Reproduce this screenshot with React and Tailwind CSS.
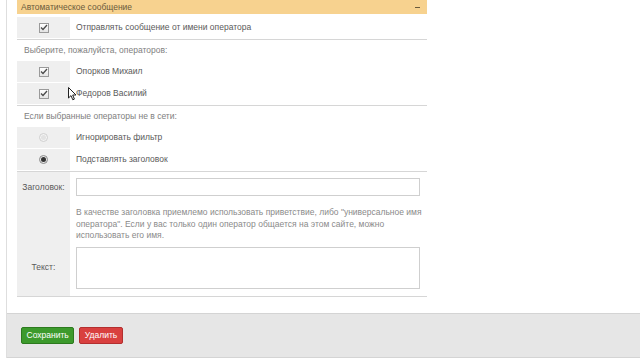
import React from "react";

function CheckBox() {
  return (
    <span className="inline-flex h-[10px] w-[10px] items-center justify-center border border-[#9a9a9a] bg-gradient-to-b from-white to-[#e4e4e4]">
      <svg width="8" height="7" viewBox="0 0 8 7">
        <path d="M1 3.5 L3 5.5 L7 1" fill="none" stroke="#4a4a4a" strokeWidth="1.3" />
      </svg>
    </span>
  );
}

function Radio({ checked }) {
  return checked ? (
    <span className="inline-flex h-[9px] w-[9px] items-center justify-center rounded-full border border-[#8a8a8a] bg-[#e8e8e8]">
      <span className="h-[5px] w-[5px] rounded-full bg-[#333]" />
    </span>
  ) : (
    <span className="inline-flex h-[9px] w-[9px] items-center justify-center rounded-full border border-[#cfcfcf] bg-[#f4f4f4]">
      <span className="h-[5px] w-[5px] rounded-full bg-[#e2e2e2]" />
    </span>
  );
}

function OptionRow({ control, label }) {
  return (
    <div className="flex h-[21px]">
      <div className="flex w-[53px] items-center justify-center bg-[#efefef]">{control}</div>
      <div className="flex items-center pl-[6px] text-[#5a5a5a]">{label}</div>
    </div>
  );
}

function SectionLabel({ children }) {
  return <div className="flex h-[21px] items-center pl-[7px] text-[#7e7e7e]">{children}</div>;
}

export default function App() {
  return (
    <div className="relative h-[360px] w-[640px] overflow-hidden bg-white text-[8.5px] leading-none" style={{ fontFamily: '"Liberation Sans", Arial, sans-serif' }}>
      <div className="ml-[6px] flex h-[358px] flex-col border-l border-[#dedede]">
        <div className="w-[410px] pl-[10px] box-content">
          {/* header + first option */}
          <div className="border-b border-[#d6d6d6] pb-[1px]">
            <div className="flex h-[14px] items-center justify-between bg-[#f7d28f] px-[4px] text-[#6a5a3c]">
              <span>Автоматическое сообщение</span>
              <span className="mr-[3px] h-[1px] w-[5px] bg-[#6a5a3c]" />
            </div>
            <div className="mt-[3px]">
              <OptionRow control={<CheckBox />} label="Отправлять сообщение от имени оператора" />
            </div>
          </div>

          {/* operators */}
          <div className="border-b border-[#d6d6d6] pb-[1px]">
            <SectionLabel>Выберите, пожалуйста, операторов:</SectionLabel>
            <div className="flex flex-col gap-[1px]">
              <OptionRow control={<CheckBox />} label="Опорков Михаил" />
              <OptionRow control={<CheckBox />} label="Федоров Василий" />
            </div>
          </div>

          {/* offline */}
          <div className="border-b border-[#d6d6d6] pb-[1px]">
            <SectionLabel>Если выбранные операторы не в сети:</SectionLabel>
            <div className="flex flex-col gap-[1px]">
              <OptionRow control={<Radio />} label="Игнорировать фильтр" />
              <OptionRow control={<Radio checked />} label="Подставлять заголовок" />
            </div>
          </div>

          {/* title + text */}
          <div className="grid grid-cols-[53px_1fr] border-b border-[#d6d6d6]">
            <div className="flex items-center justify-center bg-[#efefef] pt-[6px] text-[#5a5a5a]">Заголовок:</div>
            <div className="pl-[6px] pr-[6px] pt-[6px]">
              <div className="h-[18px] w-[344px] border border-[#cfcfcf] bg-white" />
            </div>
            <div className="bg-[#efefef]" />
            <div className="pl-[6px] pr-[4px] pt-[11px] pb-[5px] text-[8.5px] leading-[11.5px] text-[#8a8a8a]">
              В качестве заголовка приемлемо использовать приветствие, либо "универсальное имя оператора". Если у вас только один оператор общается на этом сайте, можно использовать его имя.
            </div>
            <div className="flex items-center justify-center bg-[#efefef] pb-[7px] text-[#5a5a5a]">Текст:</div>
            <div className="pl-[6px] pr-[6px] pb-[7px]">
              <div className="h-[42px] w-[344px] border border-[#cfcfcf] bg-white" />
            </div>
          </div>
        </div>

        <div className="flex-1" />

        {/* footer */}
        <div className="flex h-[45px] items-center gap-[5px] border-y border-[#d4d4d4] bg-[#e6e6e6] pl-[14px]">
          <button className="h-[17px] rounded-[2px] border border-[#2c7a1e] bg-[#3c9a2c] px-[4.5px] text-[8.5px] text-white">Сохранить</button>
          <button className="h-[17px] rounded-[2px] border border-[#b32f2f] bg-[#d9403f] px-[4.5px] text-[8.5px] text-white">Удалить</button>
        </div>
      </div>

      {/* mouse cursor */}
      <svg className="absolute left-[68px] top-[87px]" width="9" height="14" viewBox="0 0 9 14">
        <path d="M0.5 0.5 L0.5 11 L3 8.6 L4.8 12.8 L6.4 12.1 L4.7 8 L8 8 Z" fill="white" stroke="#222" strokeWidth="1" />
      </svg>
    </div>
  );
}
